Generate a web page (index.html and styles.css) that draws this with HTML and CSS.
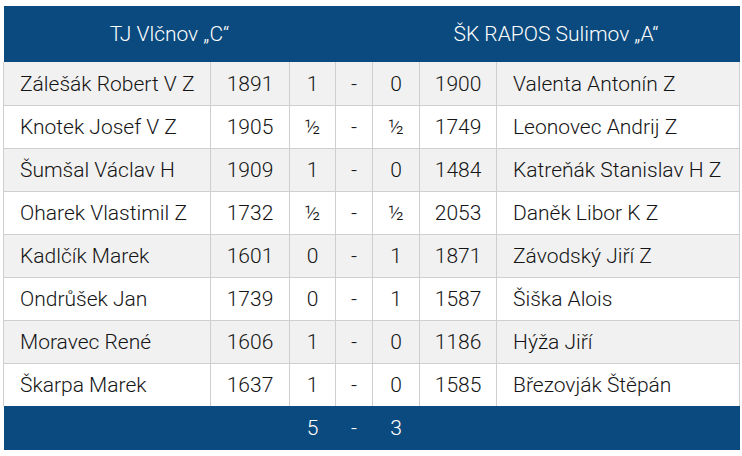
FILE: index.html
```html
<!DOCTYPE html>
<html lang="cs">
<head>
<meta charset="utf-8">
<link rel="stylesheet" href="styles.css">
</head>
<body>
<table class="match">
  <colgroup>
    <col class="c-name"><col class="c-elo"><col class="c-res"><col class="c-dash"><col class="c-res2"><col class="c-elo2"><col class="c-name2">
  </colgroup>
  <thead>
    <tr class="head">
      <th colspan="3">TJ Vlčnov „C“</th>
      <th></th>
      <th colspan="3">ŠK RAPOS Sulimov „A“</th>
    </tr>
  </thead>
  <tbody>
    <tr><td class="name">Zálešák Robert V Z</td><td class="num">1891</td><td class="num">1</td><td class="num">-</td><td class="num">0</td><td class="num">1900</td><td class="name">Valenta Antonín Z</td></tr>
    <tr><td class="name">Knotek Josef V Z</td><td class="num">1905</td><td class="num">½</td><td class="num">-</td><td class="num">½</td><td class="num">1749</td><td class="name">Leonovec Andrij Z</td></tr>
    <tr><td class="name">Šumšal Václav H</td><td class="num">1909</td><td class="num">1</td><td class="num">-</td><td class="num">0</td><td class="num">1484</td><td class="name">Katreňák Stanislav H Z</td></tr>
    <tr><td class="name">Oharek Vlastimil Z</td><td class="num">1732</td><td class="num">½</td><td class="num">-</td><td class="num">½</td><td class="num">2053</td><td class="name">Daněk Libor K Z</td></tr>
    <tr><td class="name">Kadlčík Marek</td><td class="num">1601</td><td class="num">0</td><td class="num">-</td><td class="num">1</td><td class="num">1871</td><td class="name">Závodský Jiří Z</td></tr>
    <tr><td class="name">Ondrůšek Jan</td><td class="num">1739</td><td class="num">0</td><td class="num">-</td><td class="num">1</td><td class="num">1587</td><td class="name">Šiška Alois</td></tr>
    <tr><td class="name">Moravec René</td><td class="num">1606</td><td class="num">1</td><td class="num">-</td><td class="num">0</td><td class="num">1186</td><td class="name">Hýža Jiří</td></tr>
    <tr><td class="name">Škarpa Marek</td><td class="num">1637</td><td class="num">1</td><td class="num">-</td><td class="num">0</td><td class="num">1585</td><td class="name">Březovják Štěpán</td></tr>
  </tbody>
  <tfoot>
    <tr class="foot"><td colspan="2"></td><td class="num">5</td><td class="num">-</td><td class="num">3</td><td colspan="2"></td></tr>
  </tfoot>
</table>
</body>
</html>
```
FILE: styles.css
```css
html, body {
  margin: 0;
  padding: 0;
  background: #ffffff;
}
body {
  padding: 6px 3px 0 3px;
  font-family: Roboto, "Liberation Sans", sans-serif;
  font-weight: 300;
  font-size: 21px;
  color: #141414;
}
.match {
  border-collapse: collapse;
  table-layout: fixed;
  width: 736px;
}
.c-name { width: 207px; }
.c-elo { width: 79px; }
.c-res { width: 46px; }
.c-dash { width: 37px; }
.c-res2 { width: 47px; }
.c-elo2 { width: 77px; }
.c-name2 { width: 243px; }

.head th {
  background: #0b4a7e;
  color: #ffffff;
  font-weight: 300;
  height: 56px;
  padding: 0;
  text-align: center;
  border: none;
}
tbody td {
  height: 42px;
  padding: 0;
  border: 1px solid #cfcfcf;
  white-space: nowrap;
}
tbody tr:first-child td { border-top: none; height: 43px; }
tbody tr:last-child td { border-bottom: none; }
tbody tr:nth-child(odd) td { background: #f1f1f1; }
tbody tr:nth-child(even) td { background: #ffffff; }
.num { text-align: center; }
tbody td.name { padding-left: 16px; text-align: left; }
.foot td {
  background: #0b4a7e;
  color: #ffffff;
  height: 44px;
  padding: 0;
  border: none;
}
```
